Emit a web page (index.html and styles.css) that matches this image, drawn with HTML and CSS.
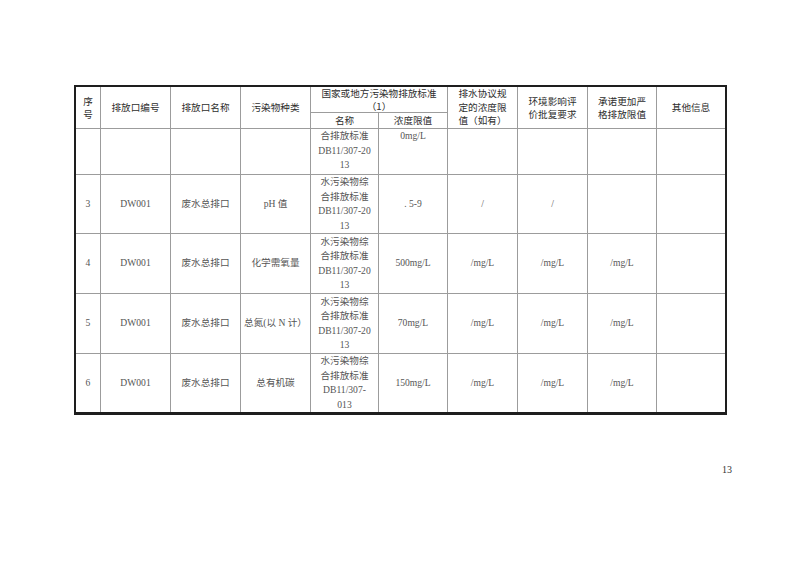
FILE: index.html
```html
<!DOCTYPE html>
<html lang="zh">
<head>
<meta charset="utf-8">
<title>污染物排放表</title>
<link rel="stylesheet" href="styles.css">
</head>
<body>
<div class="page">
  <table class="grid">
    <colgroup>
      <col class="c1"><col class="c2"><col class="c3"><col class="c4"><col class="c5">
      <col class="c6"><col class="c7"><col class="c8"><col class="c9"><col class="c10">
    </colgroup>
    <thead>
      <tr class="h1">
        <th rowspan="2">序<br>号</th>
        <th rowspan="2">排放口编号</th>
        <th rowspan="2">排放口名称</th>
        <th rowspan="2">污染物种类</th>
        <th colspan="2" class="tight">国家或地方污染物排放标准<br>（1）</th>
        <th rowspan="2" class="three">排水协议规<br>定的浓度限<br>值（如有）</th>
        <th rowspan="2">环境影响评<br>价批复要求</th>
        <th rowspan="2">承诺更加严<br>格排放限值</th>
        <th rowspan="2" class="last">其他信息</th>
      </tr>
      <tr class="h2">
        <th>名称</th>
        <th>浓度限值</th>
      </tr>
    </thead>
    <tbody>
      <tr class="r1">
        <td></td>
        <td></td>
        <td></td>
        <td></td>
        <td class="std top">合排放标准<br>DB11/307-20<br>13</td>
        <td class="top">0mg/L</td>
        <td></td>
        <td></td>
        <td></td>
        <td class="last"></td>
      </tr>
      <tr class="r3">
        <td>3</td>
        <td>DW001</td>
        <td>废水总排口</td>
        <td>pH 值</td>
        <td class="std">水污染物综<br>合排放标准<br>DB11/307-20<br>13</td>
        <td>. 5-9</td>
        <td>/</td>
        <td>/</td>
        <td></td>
        <td class="last"></td>
      </tr>
      <tr class="r4">
        <td>4</td>
        <td>DW001</td>
        <td>废水总排口</td>
        <td>化学需氧量</td>
        <td class="std">水污染物综<br>合排放标准<br>DB11/307-20<br>13</td>
        <td>500mg/L</td>
        <td>/mg/L</td>
        <td>/mg/L</td>
        <td>/mg/L</td>
        <td class="last"></td>
      </tr>
      <tr class="r5">
        <td>5</td>
        <td>DW001</td>
        <td>废水总排口</td>
        <td>总氮(以 N 计）</td>
        <td class="std">水污染物综<br>合排放标准<br>DB11/307-20<br>13</td>
        <td>70mg/L</td>
        <td>/mg/L</td>
        <td>/mg/L</td>
        <td>/mg/L</td>
        <td class="last"></td>
      </tr>
      <tr class="r6">
        <td>6</td>
        <td>DW001</td>
        <td>废水总排口</td>
        <td>总有机碳</td>
        <td class="std">水污染物综<br>合排放标准<br>DB11/307-<br>013</td>
        <td>150mg/L</td>
        <td>/mg/L</td>
        <td>/mg/L</td>
        <td>/mg/L</td>
        <td class="last"></td>
      </tr>
    </tbody>
  </table>
  <div class="pageno">13</div>
</div>
</body>
</html>
```

FILE: styles.css
```css
html, body {
  margin: 0;
  padding: 0;
  background: #ffffff;
}

.page {
  width: 800px;
  height: 565px;
  box-sizing: border-box;
  padding: 85px 0 0 74px;
  overflow: hidden;
}

.grid {
  table-layout: fixed;
  border-collapse: separate;
  border-spacing: 0;
  width: 653px;
  border: 2px solid #1e1e1e;
  border-bottom-width: 3px;
}

.c1 { width: 25px; }
.c2 { width: 70px; }
.c3 { width: 70px; }
.c4 { width: 70px; }
.c5 { width: 68px; }
.c6 { width: 69px; }
.c7 { width: 70px; }
.c8 { width: 70px; }
.c9 { width: 69px; }
.c10 { width: 68px; }

.grid th,
.grid td {
  padding: 0;
  text-align: center;
  vertical-align: middle;
  border-right: 1px solid #9c9c9c;
  border-bottom: 1px solid #9c9c9c;
  white-space: nowrap;
  overflow: hidden;
}

.grid th {
  font-family: "Noto Sans CJK SC", "Liberation Sans", sans-serif;
  font-weight: 400;
  font-size: 9.6px;
  line-height: 13px;
  color: #2e2e2e;
}

.grid th.tight {
  line-height: 12.5px;
}

.grid th.three {
  line-height: 13.5px;
}

.grid td {
  font-family: "Liberation Serif", "Noto Sans CJK SC", serif;
  font-size: 9.6px;
  line-height: 14.5px;
  color: #555555;
}

.grid .last {
  border-right: none;
}

.grid tbody tr:last-child td {
  border-bottom: none;
}

.grid td.top {
  vertical-align: top;
}

.h1 { height: 26px; }
.h2 { height: 16px; }
.r1 { height: 46px; }
.r3 { height: 59px; }
.r4 { height: 60px; }
.r5 { height: 60px; }
.r6 { height: 58px; }

.pageno {
  width: 658px;
  margin-top: 49px;
  text-align: right;
  font-family: "Liberation Serif", serif;
  font-size: 10px;
  line-height: 12px;
  color: #333333;
}
```
